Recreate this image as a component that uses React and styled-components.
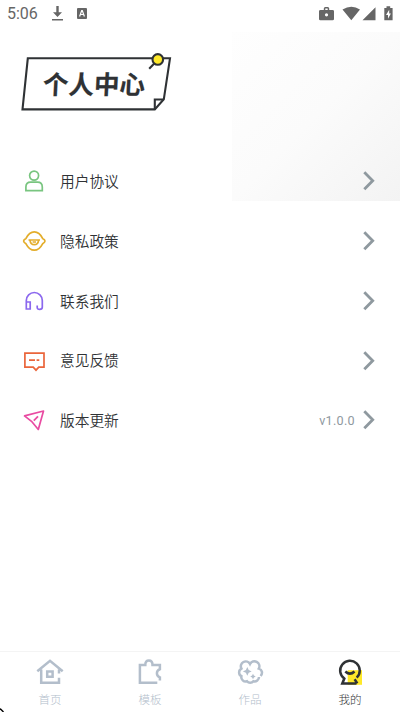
import React from "react";
import styled, {createGlobalStyle} from "styled-components";

const Color = {
  TEXT: `#2f3235`,
  MUTED: `#8f999f`,
  TAB: `#b3becb`,
  STATUS: `#666666`,
  YELLOW: `#ffe929`,
};

const GlobalStyle = createGlobalStyle`
  * {
    box-sizing: border-box;
  }

  body {
    margin: 0;
    font-family: Roboto, "Noto Sans CJK SC", sans-serif;
    color: ${Color.TEXT};
    background: #ffffff;
  }

  svg {
    display: block;
    flex-shrink: 0;
    overflow: visible;
  }
`;

const Screen = styled.div`
  position: relative;
  display: flex;
  flex-direction: column;
  width: 400px;
  height: 712px;
  overflow: hidden;
`;

const Shade = styled.div`
  position: absolute;
  top: 32px;
  right: 0;
  width: 168px;
  height: 169px;
  background: linear-gradient(135deg, #fefefe 0%, #fbfbfb 50%, #f3f3f3 100%);
`;

const StatusBar = styled.header`
  display: flex;
  align-items: center;
  height: 28px;
  padding: 0 6px 0 7px;
  color: ${Color.STATUS};
`;

const Clock = styled.span`
  width: 44px;
  font-size: 16px;
  line-height: 28px;
`;

const StatusIcons = styled.div`
  display: flex;
  align-items: center;
  margin-left: ${({$right}) => $right ? `auto` : `0`};
`;

const Title = styled.h1`
  position: relative;
  display: flex;
  align-items: center;
  width: 152px;
  height: 62px;
  margin: 22px 0 0 20px;
  padding: 3px 0 0 23px;
  font-family: "Noto Sans CJK SC", sans-serif;
  font-size: 25.5px;
  font-weight: 700;
  line-height: 30px;
  white-space: nowrap;
  -webkit-text-stroke: 0.2px ${Color.TEXT};
`;

const TitleFrame = styled.svg`
  position: absolute;
  top: 0;
  left: 0;
`;

const TitleText = styled.span`
  position: relative;
  transform: skewX(-3deg);
`;

const Menu = styled.ul`
  position: relative;
  margin: 39.6px 0 0;
  padding: 0;
  list-style: none;
`;

const MenuItem = styled.li`
  display: flex;
  align-items: center;
  height: 59.75px;
  padding: 0 25px 0 22px;
`;

const MenuLabel = styled.span`
  margin-left: 14px;
  padding-top: 1.5px;
  font-size: 14.7px;
  font-weight: 350;
  line-height: 22px;
`;

const Version = styled.span`
  margin-right: 8px;
  padding-top: 1px;
  font-size: 12.6px;
  letter-spacing: 0.3px;
  color: ${Color.MUTED};
`;

const MenuEnd = styled.div`
  display: flex;
  align-items: center;
  margin-left: auto;
`;

const TabBar = styled.nav`
  display: grid;
  grid-template-columns: repeat(4, 1fr);
  height: 61px;
  margin-top: auto;
  border-top: 1px solid #f4f4f4;
`;

const Tab = styled.a`
  display: flex;
  flex-direction: column;
  align-items: center;
  padding-top: 6px;
  font-family: "Noto Sans CJK SC", sans-serif;
  font-size: 11.5px;
  font-weight: 300;
  line-height: 14px;
  color: ${({$active}) => $active ? Color.TEXT : Color.TAB};
`;

const TabLabel = styled.span`
  margin-top: 6px;
`;

const CornerMark = styled.svg`
  position: absolute;
  bottom: 0;
  left: 0;
`;

const LineIcon = ({color, children}) => (
  <svg width="24" height="24" viewBox="0 0 24 24" fill="none" stroke={color} strokeWidth="1.7">
    {children}
  </svg>
);

const TabIcon = ({children}) => (
  <svg width="28" height="28" viewBox="0 0 28 28" fill="none" stroke="currentColor" strokeWidth="2.5">
    {children}
  </svg>
);

const Chevron = () => (
  <svg width="12" height="20" viewBox="0 0 12 20" fill="none" stroke={Color.MUTED} strokeWidth="2.8">
    <path d="M1.3 1.3 9.7 9.8 1.3 18.3"/>
  </svg>
);

const menuItems = [
  {
    label: `用户协议`,
    icon: (
      <LineIcon color="#79c580">
        <circle cx="12.1" cy="6.6" r="4.5"/>
        <path d="M3.9 21.6V18Q3.9 13.2 8.7 13.2H15.5Q20.3 13.2 20.3 18V21.6Z"/>
      </LineIcon>
    ),
  },
  {
    label: `隐私政策`,
    icon: (
      <LineIcon color="#e3ad2b">
        <path d="M1.6 12Q1.6 10.6 4 9.4C6.2 5 8.9 2.9 12.3 2.9S18.4 5 20.6 9.4Q23 10.6 23 12T20.6 14.8C18.4 19 15.7 21.2 12.3 21.2S6.2 19 4 14.8Q1.6 13.4 1.6 12Z"/>
        <path d="M6.5 11H18M8 11.3Q8.6 15.7 12.3 15.7T16.6 11.3M10.6 13H14"/>
      </LineIcon>
    ),
  },
  {
    label: `联系我们`,
    icon: (
      <LineIcon color="#8b68ee">
        <path d="M4.3 13V11.5A8 8 0 0 1 20.3 11.5V18.3Q20.3 20.3 17.7 20.3T15.2 18.3V16.5M4.3 13H8.2V20H4.3Z"/>
      </LineIcon>
    ),
  },
  {
    label: `意见反馈`,
    icon: (
      <LineIcon color="#ea653b">
        <path d="M2.9 4.1H22V18.2H16.8L14 21.2 11.2 18.2H2.9Z"/>
        <path d="M7 11.2H13M14.6 11.2H17.3"/>
      </LineIcon>
    ),
  },
  {
    label: `版本更新`,
    version: `v1.0.0`,
    icon: (
      <LineIcon color="#e94ba2">
        <path strokeLinejoin="round" d="M2.5 7.9 21.5 3 16.3 21.5 9.5 13.3Z"/>
        <path d="M11.8 12.7 16 8.3"/>
      </LineIcon>
    ),
  },
];

const tabs = [
  {
    label: `首页`,
    icon: (
      <TabIcon>
        <path d="M1.3 13.3 14 2.8 26.7 13.3M5.2 11.5V24.7H23V19.8M23 11.5V15.5"/>
        <path d="M11.2 13.6H16.6V18.8H11.2Z"/>
      </TabIcon>
    ),
  },
  {
    label: `模板`,
    icon: (
      <TabIcon>
        <path d="M21.3 24.7H3.9V7H9.3Q9.3 2.6 12.9 2.6T16.5 7H23.9V11.2A4.3 4.3 0 0 0 23.9 19.4V22.4"/>
      </TabIcon>
    ),
  },
  {
    label: `作品`,
    icon: (
      <TabIcon>
        <path d="M24.6 18C27 15.2 26.2 11.6 22.8 10.6A4.4 4.4 0 0 0 14 6A4.4 4.4 0 0 0 5.4 10.6A4.3 4.3 0 0 0 5.4 18.2A4.4 4.4 0 0 0 11 23.3A4.1 4.1 0 0 0 17.4 23.3A4.4 4.4 0 0 0 23 19"/>
        <path fill="currentColor" stroke="none" d="M11.3 9 12.7 12 15.7 13.4 12.7 14.8 11.3 17.8 9.9 14.8 6.9 13.4 9.9 12ZM17 15.7 17.9 17.6 19.8 18.5 17.9 19.4 17 21.3 16.1 19.4 14.2 18.5 16.1 17.6Z"/>
      </TabIcon>
    ),
  },
  {
    label: `我的`,
    active: true,
    icon: (
      <TabIcon>
        <path fill={Color.YELLOW} stroke="none" d="M11.7 12.2H26V26.8H11.7Z"/>
        <path d="M20.7 19.7A9.8 9.8 0 1 0 8.3 20.6L6.3 25.4H20.5M18.6 21.3 21.3 25.4"/>
        <path d="M9.3 13.5Q14 17.8 18.5 13.5"/>
      </TabIcon>
    ),
  },
];

const App = () => {
  return (
    <Screen>
      <GlobalStyle/>
      <Shade/>
      <StatusBar>
        <Clock>5:06</Clock>
        <StatusIcons>
          <svg width="36" height="16" viewBox="0 0 36 16" fill="currentColor">
            <path d="M5.3 0H7.7V6.3H11L6.5 11 2 6.3H5.3ZM1 13H12V14.6H1Z"/>
            <rect x="26" y="2" width="10" height="11" rx="1"/>
            <path d="M28.6 10.5 30.7 4.5H31.3L33.4 10.5M29.5 8.5H32.5" fill="none" stroke="#fff" strokeWidth="1.2"/>
          </svg>
        </StatusIcons>
        <StatusIcons $right>
          <svg width="75" height="16" viewBox="0 0 75 16" fill="currentColor">
            <path fillRule="evenodd" d="M1.5 4H4.8V2.5Q4.8 1 6.3 1H8.7Q10.2 1 10.2 2.5V4H13.5Q15 4 15 5.3V13Q15 14.3 13.6 14.3H1.4Q0 14.3 0 13V5.3Q0 4 1.5 4ZM6.3 4H8.7V2.5H6.3ZM7.5 7.2A1.6 1.6 0 1 0 7.5 10.4A1.6 1.6 0 1 0 7.5 7.2Z"/>
            <path d="M23.5 3.5Q32.5-2 41 3.5L32.3 14.3ZM43.5 14.3H56.5V1.2Z"/>
            <path d="M65.3 2H67.5V.2H71.2V2H73.6V14.3H65.3Z"/>
            <path fill="#fff" d="M70.2 3.8 67 9H69V12.7L71.9 7.5H70.2Z"/>
          </svg>
        </StatusIcons>
      </StatusBar>
      <Title>
        <TitleFrame width="152" height="62" viewBox="0 0 152 62" fill="none" stroke={Color.TEXT} strokeWidth="2.1">
          <path d="M7.8 8.3H150L143.8 49.3 134.8 59.4H2.5Z"/>
          <path d="M143.8 49.5H134.8V59.4"/>
          <path d="M134.5 13.2 129.2 18.8"/>
          <circle cx="137.8" cy="9.4" r="5.3" fill={Color.YELLOW}/>
        </TitleFrame>
        <TitleText>个人中心</TitleText>
      </Title>
      <Menu>
        {menuItems.map(({label, icon, version}) => (
          <MenuItem key={label}>
            {icon}
            <MenuLabel>{label}</MenuLabel>
            <MenuEnd>
              {version && <Version>{version}</Version>}
              <Chevron/>
            </MenuEnd>
          </MenuItem>
        ))}
      </Menu>
      <TabBar>
        {tabs.map(({label, icon, active}) => (
          <Tab key={label} $active={active}>
            {icon}
            <TabLabel>{label}</TabLabel>
          </Tab>
        ))}
      </TabBar>
      <CornerMark width="4" height="4" viewBox="0 0 4 4" stroke="#000" strokeWidth="1.4">
        <path d="M0 .5 3.5 4"/>
      </CornerMark>
    </Screen>
  );
};

export default App;
